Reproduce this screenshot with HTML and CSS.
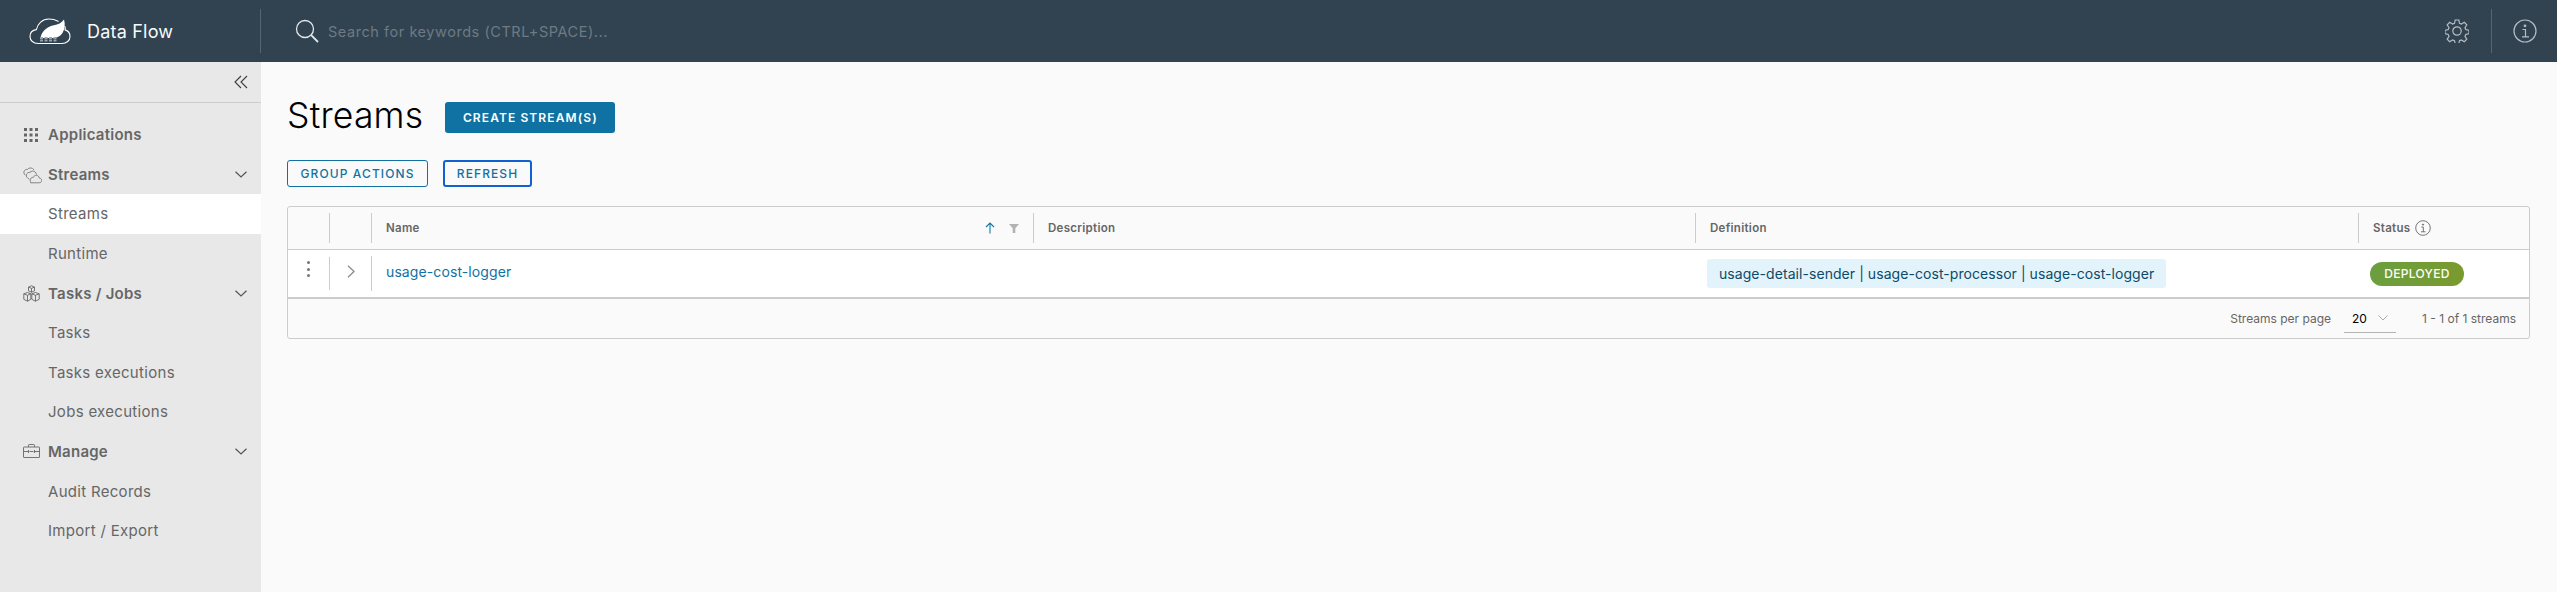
FILE: index.html
```html
<!DOCTYPE html>
<html lang="en">
<head>
    <meta charset="UTF-8">
    <meta name="viewport" content="width=device-width, initial-scale=1.0">
    <title>Data Flow - Streams</title>
    <link rel="stylesheet" href="styles.css">
</head>
<body>
    <div class="navbar">
        <div class="brand">
            <svg class="logo" width="42" height="28" viewBox="0 0 42 28" fill="none">
                <path d="M9 26.500C4.500 26.500 1 23.600 1 19.400 1 15.600 3.700 13 7.400 12.600 8.600 6.600 13.400 2 19.800 2c3.400 0 6.800.8 9.800 2.400M36 9.400c.3 1.200.3 2.300.1 3.500 2.900.9 4.900 3.300 4.900 6.500 0 4.200-3.500 7.100-8 7.100H9" stroke="#fff" stroke-width="1.100"/>
                <path d="M11.500 21C12.500 14 18.500 9.500 25 8.300c4-.7 7.500-2.300 10-5.800 1.300 4.500 1 9.500-1.500 13.500-2.500 3.800-6.500 5-10.500 5z" fill="#fff"/>
                <path d="M11 21h17M11 23.500h17" stroke="#98a4ad" stroke-width="2" stroke-dasharray="3 1.500"/>
            </svg>
            <a class="brand-name" href="#">Data Flow</a>
        </div>
        <div class="search">
            <svg width="24" height="24" viewBox="0 0 24 24" fill="none" stroke="#e4e7e9" stroke-width="1.300">
                <circle cx="10" cy="10" r="8.500"/>
                <path d="M16.200 16.200l6.800 6.800" stroke-width="1.800"/>
            </svg>
            <span class="search-text">Search for keywords (CTRL+SPACE)...</span>
        </div>
        <div class="nav-action">
            <svg width="24" height="24" viewBox="0 0 24 24" fill="none" stroke="#b5bdc3" stroke-width="1.200">
                <circle cx="12" cy="12" r="4.200"/>
                <path d="M10.200 1h3.600l.7 3.300 1.900.8 2.900-1.800 2.500 2.500-1.800 2.900.8 1.900 3.200.7v3.400l-3.200.8-.8 1.900 1.800 2.800-2.500 2.500-2.900-1.800-1.900.8-.7 3.200h-3.600l-.7-3.200-1.900-.8-2.900 1.800-2.500-2.500 1.800-2.800-.8-1.900-3.200-.8v-3.400l3.200-.7.8-1.900-1.800-2.900 2.500-2.500 2.900 1.800 1.900-.8z"/>
            </svg>
        </div>
        <div class="nav-action nav-info">
            <svg width="24" height="24" viewBox="0 0 24 24" fill="none" stroke="#b5bdc3" stroke-width="1.200">
                <circle cx="12" cy="12" r="11"/>
                <circle cx="12" cy="6.800" r=".8" fill="#b5bdc3"/>
                <path d="M9.500 10.500H12.500V17.500M9 17.800h7"/>
            </svg>
        </div>
    </div>

    <div class="layout">
        <div class="sidebar">
            <div class="collapse">
                <svg width="14" height="14" viewBox="0 0 14 14" fill="none" stroke="#3c3c3c" stroke-width="1.100">
                    <path d="M7 1L1 7l6 6M13 1L7 7l6 6"/>
                </svg>
            </div>
            <div class="nav-list">
                <a class="nav-item nav-head" href="#">
                    <svg class="nav-icon" width="16" height="16" viewBox="0 0 16 16" fill="#666">
                        <rect x="1" y="1" width="3" height="3"/><rect x="6.500" y="1" width="3" height="3"/><rect x="12" y="1" width="3" height="3"/>
                        <rect x="1" y="6.500" width="3" height="3"/><rect x="6.500" y="6.500" width="3" height="3"/><rect x="12" y="6.500" width="3" height="3"/>
                        <rect x="1" y="12" width="3" height="3"/><rect x="6.500" y="12" width="3" height="3"/><rect x="12" y="12" width="3" height="3"/>
                    </svg>
                    Applications
                </a>
                <a class="nav-item nav-head" href="#">
                    <svg class="nav-icon" width="19" height="17" viewBox="0 0 19 17" fill="none" stroke="#777" stroke-width=".9">
                        <path d="M7.500 15.800h8.700c1.500 0 2.500-1 2.500-2.300s-1-2.300-2.400-2.400c-.2-1.600-1.500-2.800-3-2.800-1.300 0-2.400.8-2.900 2-1.600-.2-3.200 1-3.200 2.900 0 1.400.8 2.600.3 2.600z"/>
                        <path d="M6.200 12.200C4.200 11 3 9.800 3.400 7.800c.4-1.700 2-2.700 3.600-2.400 1.200-1.500 3.300-1.700 4.800-.6 1 .8 1.600 1.700 1.700 2.800"/>
                        <path d="M2.300 8.200C.6 6.800.5 5 1.500 3.600c.8-1 2-1.400 3-1.200C5.800.8 8 .6 9.500 1.500c.7.400 1.200 1 1.500 1.700"/>
                    </svg>
                    Streams
                    <svg class="nav-caret" width="12" height="7" viewBox="0 0 12 7" fill="none" stroke="#555" stroke-width="1.200"><path d="M.5.700L6 6l5.500-5.300"/></svg>
                </a>
                <a class="nav-item active" href="#">Streams</a>
                <a class="nav-item" href="#">Runtime</a>
                <a class="nav-item nav-head" href="#">
                    <svg class="nav-icon" width="17" height="17" viewBox="0 0 17 17" fill="none" stroke="#666" stroke-width=".9">
                        <path d="M8.500.8l3 1.300v3.800l-3 1.300-3-1.300V2.100zM5.500 2.100l3 1.300 3-1.300M8.500 3.400v3.800"/>
                        <path d="M4.500 7.500l3.300 1.300v5.500l-3.300 1.900-3.700-1.900V8.800zM.8 8.800l3.700 1.500 3.300-1.500M4.500 10.300v5.900"/>
                        <path d="M12.500 7.500l3.700 1.300v5.500l-3.700 1.900-3.700-1.900V8.800zM8.800 8.800l3.700 1.500 3.700-1.500M12.500 10.300v5.900"/>
                    </svg>
                    Tasks / Jobs
                    <svg class="nav-caret" width="12" height="7" viewBox="0 0 12 7" fill="none" stroke="#555" stroke-width="1.200"><path d="M.5.700L6 6l5.500-5.300"/></svg>
                </a>
                <a class="nav-item" href="#">Tasks</a>
                <a class="nav-item" href="#">Tasks executions</a>
                <a class="nav-item" href="#">Jobs executions</a>
                <a class="nav-item nav-head" href="#">
                    <svg class="nav-icon" width="17" height="14" viewBox="0 0 17 14" fill="none" stroke="#666" stroke-width=".9">
                        <path d="M1 3h15a.5.5 0 0 1 .5.5v9.500a.5.5 0 0 1-.5.5H1a.5.5 0 0 1-.5-.5V3.500A.5.5 0 0 1 1 3zM5.500 3V1.200c0-.3.2-.7.7-.7h4.600c.5 0 .7.4.7.7V3M.5 7.500h4.500M12 7.500h4.500M6.500 7.500h4"/>
                        <path d="M5.500 6v3M11.500 6v3"/>
                    </svg>
                    Manage
                    <svg class="nav-caret" width="12" height="7" viewBox="0 0 12 7" fill="none" stroke="#555" stroke-width="1.200"><path d="M.5.700L6 6l5.500-5.300"/></svg>
                </a>
                <a class="nav-item" href="#">Audit Records</a>
                <a class="nav-item" href="#">Import / Export</a>
            </div>
        </div>

        <div class="content">
            <div class="page-title">
                <h1>Streams</h1>
                <button class="btn btn-primary">Create stream(s)</button>
            </div>
            <div class="page-actions">
                <button class="btn btn-outline">Group actions</button>
                <button class="btn btn-outline btn-focus">Refresh</button>
            </div>

            <div class="datagrid">
                <div class="grid-row grid-head">
                    <div class="cell"></div>
                    <div class="cell"></div>
                    <div class="cell cell-name">
                        <span>Name</span>
                        <span class="sort-icons">
                            <svg width="10" height="12" viewBox="0 0 10 12" fill="none" stroke="#0f7aa6" stroke-width="1.100"><path d="M5 11.500V1M1 5l4-4 4 4"/></svg>
                            <svg width="10" height="9" viewBox="0 0 10 9" fill="#b3b3b3"><path d="M0 0h10L6.300 4.200V9H3.700V4.200z"/></svg>
                        </span>
                    </div>
                    <div class="cell">Description</div>
                    <div class="cell">Definition</div>
                    <div class="cell cell-status">
                        Status
                        <svg width="16" height="16" viewBox="0 0 16 16" fill="none" stroke="#666" stroke-width=".9">
                            <circle cx="8" cy="8" r="7.300"/>
                            <circle cx="8" cy="4.600" r=".6" fill="#666"/>
                            <path d="M6.300 7H8.300V11.700M6 11.800h4.500"/>
                        </svg>
                    </div>
                </div>
                <div class="grid-row grid-body">
                    <div class="cell cell-menu"><i></i><i></i><i></i></div>
                    <div class="cell cell-expand">
                        <svg width="8" height="13" viewBox="0 0 8 13" fill="none" stroke="#8c8c8c" stroke-width="1.300"><path d="M1 .7l6 5.800-6 5.800"/></svg>
                    </div>
                    <div class="cell"><a class="stream-link" href="#">usage-cost-logger</a></div>
                    <div class="cell"></div>
                    <div class="cell"><span class="chip">usage-detail-sender | usage-cost-processor | usage-cost-logger</span></div>
                    <div class="cell"><span class="badge">DEPLOYED</span></div>
                </div>
                <div class="grid-footer">
                    <span>Streams per page</span>
                    <span class="page-size">
                        20
                        <svg width="10" height="6" viewBox="0 0 10 6" fill="none" stroke="#aaa" stroke-width="1"><path d="M.5.500L5 5 9.500.500"/></svg>
                    </span>
                    <span>1 - 1 of 1 streams</span>
                </div>
            </div>
        </div>
    </div>
</body>
</html>
```

FILE: styles.css
```css
html, body { height: 100%; }
body { font-family: "Inter", "Open Sans", sans-serif; margin: 0; padding: 0; display: flex; flex-direction: column; overflow: hidden; background-color: #fafafa; color: #666; }
a { text-decoration: none; color: inherit; }

.navbar { height: 62px; background-color: #314351; display: flex; align-items: center; flex-shrink: 0; }
.brand { width: 261px; height: 44px; padding-left: 29px; box-sizing: border-box; display: flex; align-items: center; border-right: 1px solid #56656f; flex-shrink: 0; }
.brand-name { margin-left: 16px; font-size: 18px; color: #fafafa; letter-spacing: .2px; }
.search { flex: 1; display: flex; align-items: center; padding-left: 34px; }
.search-text { margin-left: 9px; font-size: 14.500px; color: #6d7a84; letter-spacing: .55px; }
.nav-action { width: 68px; height: 44px; display: flex; align-items: center; justify-content: center; box-sizing: border-box; }
.nav-info { width: 66px; border-left: 1px solid #56656f; }

.layout { flex: 1; display: flex; min-height: 0; }
.sidebar { width: 261px; flex-shrink: 0; background-color: #e8e8e8; }
.collapse { height: 40px; padding-right: 13px; display: flex; align-items: center; justify-content: flex-end; border-bottom: 1px solid #ccc; }
.nav-list { padding-top: 12px; }
.nav-item { height: 39.600px; padding-left: 48px; padding-right: 14px; display: flex; align-items: center; position: relative; font-size: 15px; color: #666; letter-spacing: .3px; }
.nav-head { font-weight: 600; letter-spacing: .25px; }
.nav-icon { position: absolute; left: 23px; top: 12px; }
.nav-caret { margin-left: auto; }
.nav-item.active { background-color: #fff; }

.content { flex: 1; padding: 0 27px 0 26px; min-width: 0; }
.page-title { display: flex; align-items: center; margin-top: 40px; height: 31px; }
.page-title h1 { margin: 0 0 5px 0; font-size: 35.500px; font-weight: 300; color: #000; letter-spacing: .2px; line-height: 31px; }
.btn { font-family: inherit; font-size: 12px; font-weight: 500; text-transform: uppercase; letter-spacing: 1.100px; border-radius: 3px; box-sizing: border-box; cursor: pointer; padding: 0; }
.btn-primary { width: 170px; height: 31px; margin-left: 22px; background-color: #0f72a3; border: none; color: #fff; font-weight: 600; }
.page-actions { display: flex; gap: 15px; margin-top: 27px; }
.btn-outline { width: 141px; height: 27px; background-color: transparent; border: 1px solid #0f72a3; color: #0f72a3; }
.btn-focus { width: 89px; border: 2px solid #0f62cf; }

.datagrid { margin-top: 19px; border: 1px solid #ccc; border-radius: 3px; }
.grid-row { display: grid; grid-template-columns: 42px 42px 662px 662px 663px 1fr; }
.grid-head { height: 42px; border-bottom: 1px solid #ccc; align-items: center; font-size: 11.500px; font-weight: 600; color: #666; letter-spacing: .3px; }
.grid-head .cell { height: 30px; display: flex; align-items: center; padding-left: 14px; box-sizing: border-box; border-right: 1px solid #ccc; }
.grid-head .cell:last-child { border-right: none; }
.cell-name { justify-content: space-between; padding-right: 14px; }
.sort-icons { display: flex; align-items: center; gap: 14px; }
.cell-status { gap: 5px; }
.grid-body { height: 47px; background-color: #fff; border-bottom: 2px solid #ccc; align-items: center; font-size: 14px; }
.grid-body .cell { padding-left: 14px; box-sizing: border-box; }
.grid-body .cell:nth-child(4), .grid-body .cell:nth-child(5), .grid-body .cell:nth-child(6) { padding-left: 11px; }
.grid-body .cell-menu { height: 33px; padding: 0; display: flex; flex-direction: column; align-items: center; justify-content: center; gap: 3.500px; padding-bottom: 9px; border-right: 1px solid #ccc; }
.cell-menu i { width: 3px; height: 3px; border-radius: 50%; background-color: #777; }
.grid-body .cell-expand { height: 35px; padding: 0 0 5px 0; display: flex; align-items: center; justify-content: center; border-right: 1px solid #ccc; }
.stream-link { color: #0f72a3; letter-spacing: .1px; position: relative; top: -2px; }
.chip { display: inline-block; height: 29px; line-height: 29px; padding: 0 12px; background-color: #e3f3fb; color: #0c4a68; border-radius: 3px; letter-spacing: .06px; white-space: nowrap; }
.badge { display: inline-flex; width: 94px; height: 24px; align-items: center; justify-content: center; border-radius: 12px; background-image: linear-gradient(90deg, #6b9f3f, #7a9a2e); color: #fff; font-size: 12px; font-weight: 500; letter-spacing: .3px; }
.grid-footer { height: 39px; display: flex; align-items: center; justify-content: flex-end; font-size: 12px; color: #666; padding-right: 13px; }
.page-size { width: 52px; height: 28px; box-sizing: border-box; margin: 0 26px 0 13px; padding: 0 8px; display: flex; align-items: center; justify-content: space-between; color: #000; border-bottom: 1px solid #b3b3b3; }
```
